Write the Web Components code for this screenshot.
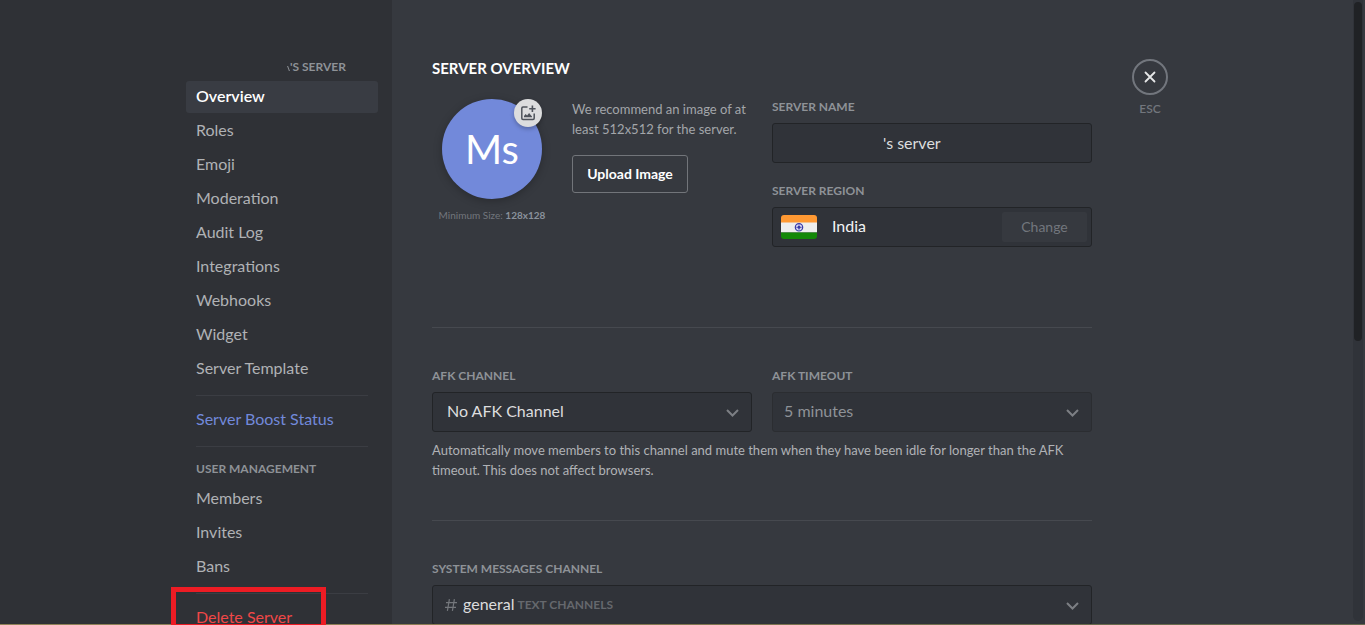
<!DOCTYPE html>
<html lang="en">
<head>
<meta charset="utf-8">
<title>Server settings</title>
<style>
html,body{margin:0;height:100%}
body{background:#36393f;color:#dcddde;font:16px/20px Lato,"Noto Sans",sans-serif;overflow:hidden}
</style>
</head>
<body>
<server-settings></server-settings>
<script>
const define = (name, html, setup) => customElements.define(name, class extends HTMLElement {
  connectedCallback() {
    if (this.shadowRoot) return;
    const t = document.createElement('template');
    t.innerHTML = html;
    this.attachShadow({mode: 'open'}).append(t.content.cloneNode(true));
    if (setup) setup(this, this.shadowRoot);
  }
});

define('nav-item', `
<style>
:host{display:block;margin-bottom:2px}
a{display:block;padding:5px 10px 7px;border-radius:3px;color:#b0b2b5;text-decoration:none}
:host([selected]) a{background:#393c43;color:#fff;font-weight:600}
:host([tone=boost]) a{color:#7289da}
:host([tone=danger]) a{color:#f04747}
</style><a href="#"><slot></slot></a>`, (el, root) => {
  if (el.hasAttribute('selected')) root.querySelector('a').setAttribute('aria-current', 'page');
});

define('nav-heading', `
<style>
:host{display:block;padding:6px 10px;color:#8e9297;font-size:12px;line-height:16px;font-weight:700;text-transform:uppercase}
h2{margin:0;font:inherit}
:host([redacted]) h2{padding-left:92px}
:host([redacted]) h2::before{content:"";display:inline-block;width:1px;height:5px;margin-right:1px;background:#8e9297;transform:skewX(20deg)}
</style><h2><slot></slot></h2>`);

define('nav-divider', `<style>:host{display:block;height:1px;margin:8px 10px;background:#3b3d43}</style>`);

define('settings-sidebar', `
<style>
:host{display:flex;justify-content:flex-end;flex:1 0 219px;background:#2f3136}
nav{box-sizing:border-box;display:flex;flex-direction:column;width:218px;padding:53px 14px 0 12px}
nav > *{flex:none}
.target{position:relative;z-index:2}
.target::after{content:"";position:absolute;left:-15px;top:-15px;width:145px;height:32px;border:5px solid #ed1c24;pointer-events:none}
</style>
<nav aria-label="Server settings">
<nav-heading redacted>'s server</nav-heading>
<nav-item selected>Overview</nav-item><nav-item>Roles</nav-item><nav-item>Emoji</nav-item>
<nav-item>Moderation</nav-item><nav-item>Audit Log</nav-item><nav-item>Integrations</nav-item>
<nav-item>Webhooks</nav-item><nav-item>Widget</nav-item><nav-item>Server Template</nav-item>
<nav-divider></nav-divider>
<nav-item tone="boost">Server Boost Status</nav-item>
<nav-divider></nav-divider>
<nav-heading>User Management</nav-heading>
<nav-item>Members</nav-item><nav-item>Invites</nav-item><nav-item>Bans</nav-item>
<nav-divider></nav-divider>
<nav-item class="target" tone="danger">Delete Server</nav-item>
</nav>`);

const fieldBase = `
:host{display:block;min-width:0}
label,.label{display:block;margin-bottom:8px;font-size:12px;line-height:16px;font-weight:700;color:#8e9297;text-transform:uppercase}
.box{box-sizing:border-box;display:flex;align-items:center;height:40px;border:1px solid #222427;border-radius:3px;background:#303339}
input,select{box-sizing:border-box;font:inherit;color:#dcddde;background:none;border:0;outline:0;margin:0;appearance:none}`;

define('text-field', `
<style>${fieldBase}
input{flex:1;min-width:0;height:38px;padding:0 10px 2px 110px}
</style><label for="f"></label><div class="box"><input id="f" type="text"></div>`, (el, root) => {
  root.querySelector('label').textContent = el.getAttribute('label');
  root.querySelector('input').value = el.getAttribute('value');
});

define('select-field', `
<style>${fieldBase}
.box{position:relative}
select{flex:1;min-width:0;height:38px;padding:0 40px 2px 14px}
.chevron{position:absolute;right:12px;top:14px;width:13px;height:12px;pointer-events:none}
.hash{display:none;flex:none;width:12px;height:14px;margin:0 6px 0 12px}
.group{display:none;color:#65686d;font-size:12px;line-height:16px;font-weight:700;text-transform:uppercase}
:host([disabled]) .box{border-color:#2b2d31}
:host([disabled]) select{color:#8e9297;opacity:1;padding-left:11px}
:host([group]) .hash,:host([group]) .group{display:block}
:host([group]) select{flex:none;field-sizing:content;padding:0 3px 2px 0}
</style><label for="f"></label>
<div class="box">
<svg class="hash" viewBox="0 0 12 14" fill="none" stroke="#74777c" stroke-width="1.2" aria-hidden="true"><path d="M4.4 1.2 2.4 12.8M9.4 1.2 7.4 12.8M1 4.6h11M0 9.4h11"/></svg>
<select id="f"><option></option></select><span class="group"></span>
<svg class="chevron" viewBox="0 0 13 12" fill="none" stroke="#7c7f84" stroke-width="2" aria-hidden="true"><path d="m1 3 5.500 5.500L12 3"/></svg>
</div>`, (el, root) => {
  root.querySelector('label').textContent = el.getAttribute('label');
  root.querySelector('option').textContent = el.getAttribute('value');
  root.querySelector('.group').textContent = el.getAttribute('group') || '';
  root.querySelector('select').disabled = el.hasAttribute('disabled');
});

define('region-field', `
<style>${fieldBase}
.box{padding:0 4px 0 8px}
.flag{width:36px;height:24px;margin-right:15px}
span{flex:1;padding-bottom:2px;color:#f2f3f5}
button{height:30px;width:85px;padding:0;border:0;border-radius:2px;background:#36393f;color:#72767d;font:inherit;font-size:14px}
</style><div class="label">Server Region</div>
<div class="box">
<svg class="flag" viewBox="0 0 36 24" role="img" aria-label="Flag of India">
<clipPath id="c"><rect width="36" height="24" rx="3"/></clipPath>
<g clip-path="url(#c)"><path fill="#f93" d="M0 0h36v8H0z"/><path fill="#eee" d="M0 7.500h36v10H0z"/><path fill="#138808" d="M0 17.500h36V24H0z"/></g>
<circle cx="18" cy="12.300" r="3.700" fill="#dcdcf2" stroke="#3a3aa8" stroke-width="1.200"/><circle cx="18" cy="12.300" r="1.500" fill="#3434a0"/>
<path d="M15 12.300h6M18 9.300v6" stroke="#3a3aa8" stroke-width=".6"/>
</svg>
<span>India</span><button type="button">Change</button></div>`);

define('server-avatar', `
<style>
:host{display:flex;flex-direction:column;align-items:center;width:120px}
.disc{position:relative;display:flex;align-items:center;justify-content:center;width:100px;height:100px;border:0;padding:0;border-radius:50%;background:#7289da;color:#fff;font:inherit;font-size:40px;line-height:48px;box-shadow:0 2px 8px rgba(0,0,0,.25)}
.badge{position:absolute;right:0;top:0;width:28px;height:28px;border-radius:50%;background:#dcddde;box-shadow:0 2px 4px rgba(0,0,0,.25)}
p{margin:8px 0 0;font-size:10px;line-height:16px;color:#72767d;white-space:nowrap}
b{color:#8a929c}
</style>
<button class="disc" type="button" aria-label="Change server icon">Ms
<svg class="badge" viewBox="0 0 28 28" aria-hidden="true"><path d="M13.500 8H9Q7.800 8 7.800 9.200v10Q7.800 20.400 9 20.400h10Q20.200 20.400 20.200 19.200v-4.700" fill="none" stroke="#4f545c" stroke-width="1.500"/><path d="M10 18.200v-1.300l1.600-2 1.500 1.500 2-2.400 2.900 3.400v.8zM17.600 6.500h1.600v2.400h2.400v1.600h-2.400v2.400h-1.600v-2.400h-2.400V8.900h2.400z" fill="#4f545c"/></svg>
</button>
<p>Minimum Size: <b>128x128</b></p>`);

define('section-divider', `<style>:host{display:block;height:1px;margin:40px 0;background:#46494f}</style>`);

define('settings-content', `
<style>
:host{display:flex;flex:1 1 800px;min-width:0;gap:40px;padding:58px 20px 0 40px;align-items:flex-start;box-sizing:border-box}
main{flex:0 1 660px;min-width:0}
h1{margin:0 0 21px;font-size:15px;line-height:20px;font-weight:700;color:#fff;text-transform:uppercase}
.cols{display:grid;grid-template-columns:1fr 1fr;gap:20px}
.top{padding-bottom:40px}
.icon{display:flex;gap:20px}
.stack{display:grid;gap:20px;align-content:start}
.hint{flex:1;min-width:0}
p{margin:0;font-size:13px;line-height:20px;color:#a3a6aa}
.hint button{margin-top:16px;height:38px;width:116px;padding:0;background:none;border:1px solid #72757a;border-radius:3px;color:#fff;font:inherit;font-size:14px;font-weight:700}
.help{margin-top:8px;color:#b0b2b6}
.close{display:grid;justify-items:center;gap:6px;margin-top:1px;padding:0;border:0;background:none;color:#72767d;font:inherit;font-size:12px;line-height:16px;font-weight:600}
.close svg{width:36px;height:36px}
</style>
<main>
<h1>Server Overview</h1>
<section class="cols top">
<div class="icon"><server-avatar></server-avatar>
<div class="hint"><p>We recommend an image of at least 512x512 for the server.</p><button type="button">Upload Image</button></div></div>
<div class="stack"><text-field label="Server Name" value="'s server"></text-field><region-field></region-field></div>
</section>
<section-divider></section-divider>
<section>
<div class="cols"><select-field label="AFK Channel" value="No AFK Channel"></select-field><select-field disabled label="AFK Timeout" value="5 minutes"></select-field></div>
<p class="help">Automatically move members to this channel and mute them when they have been idle for longer than the AFK timeout. This does not affect browsers.</p>
</section>
<section-divider></section-divider>
<select-field label="System Messages Channel" value="general" group="Text Channels"></select-field>
</main>
<button class="close" type="button"><svg viewBox="0 0 36 36" fill="none" aria-hidden="true"><circle cx="18" cy="18" r="17" stroke="#72767d" stroke-width="2"/><path d="m13.500 13.500 9 9m0-9-9 9" stroke="#e6e7e8" stroke-width="1.800" stroke-linecap="round"/></svg>ESC</button>`);

define('scroll-rail', `
<style>
:host{position:absolute;right:2px;top:0;bottom:4px;width:10px;border-radius:0 0 5px 5px;background:#303339;box-sizing:border-box;padding:2px 1px}
div{height:55%;border-radius:4px;background:#202225}
</style><div></div>`);

define('server-settings', `
<style>
:host{display:flex;position:relative;height:100vh;overflow:hidden;background:#36393f}
:host::after{content:"";position:absolute;z-index:1;left:0;right:0;bottom:0;height:1px;background:linear-gradient(90deg,#8f8258,#8a7a52 40%,#6a6a4c 75%,#66684e)}
</style>
<settings-sidebar></settings-sidebar><settings-content></settings-content><scroll-rail></scroll-rail>`);
</script>
</body>
</html>
